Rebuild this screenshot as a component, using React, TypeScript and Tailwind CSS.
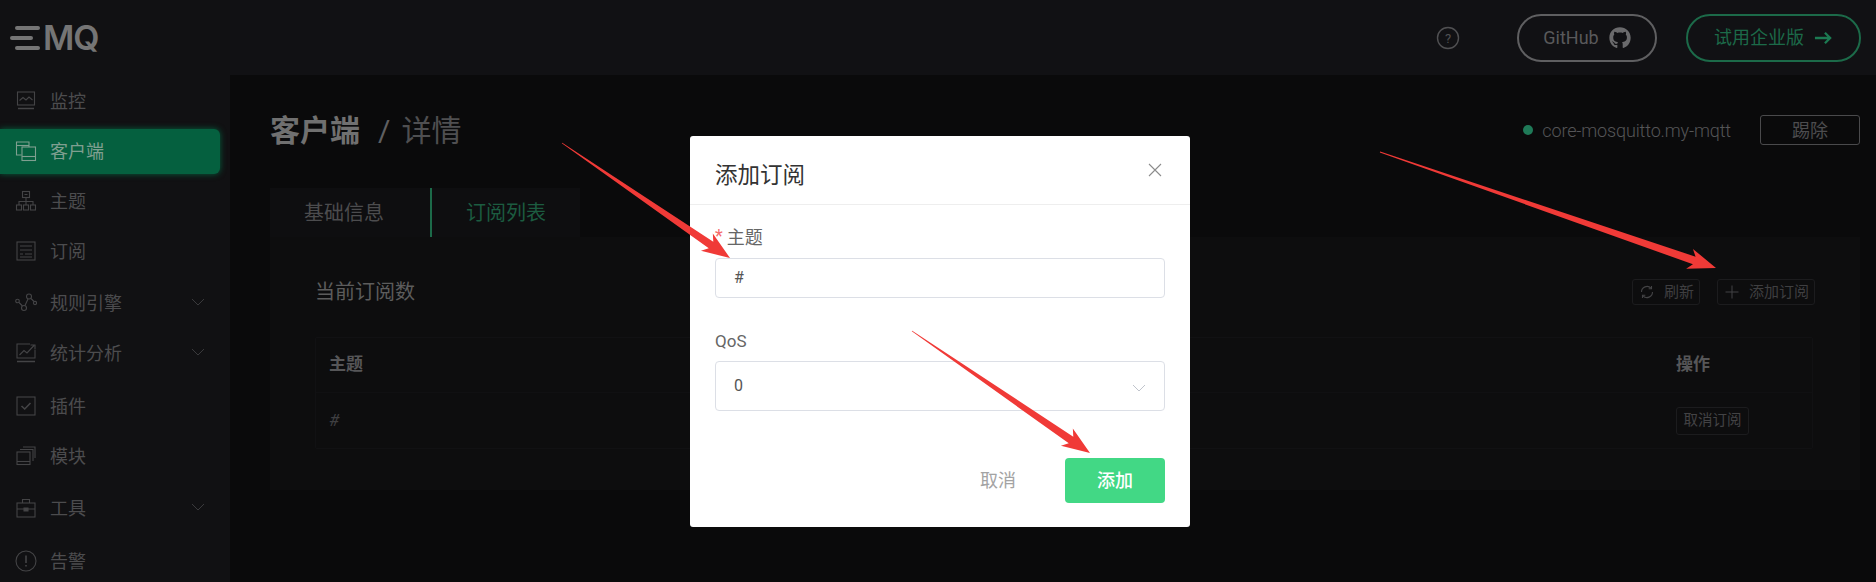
import React from "react";
import { FaGithub } from "react-icons/fa";

const FONT = "[font-family:Roboto,'Noto_Sans_CJK_SC',sans-serif]";

type IconProps = { className?: string };
const S = ({ children, className }: { children: React.ReactNode; className?: string }) => (
  <svg viewBox="0 0 22 22" width="22" height="22" fill="none" stroke="currentColor" strokeWidth="1.1" className={className}>
    {children}
  </svg>
);
const Monitor = () => (
  <S>
    <rect x="2.5" y="2" width="17" height="13" />
    <path d="M4.5 10.5 8 7.5l3 2.5 3-3 3.5 3" />
    <path d="M3 18.5h16" strokeWidth="1.5" />
  </S>
);
const Clients = () => (
  <S>
    <path d="M6.500 15H1.500V2h12.500v5" />
    <path d="M1.500 5.500h12.500" />
    <rect x="7" y="7" width="13.500" height="13.500" />
    <path d="M7 16.500h13.500" />
  </S>
);
const Topic = () => (
  <S>
    <rect x="7.500" y="1.500" width="7" height="6" />
    <path d="M9.500 4.500h3M11 7.500v4M4 15v-3.500h14V15M11 11.500V15" />
    <rect x="1.500" y="15" width="5" height="5" />
    <rect x="8.500" y="15" width="5" height="5" />
    <rect x="15.500" y="15" width="5" height="5" />
  </S>
);
const Sub = () => (
  <S>
    <rect x="2" y="2" width="18" height="18" />
    <path d="M5 6h12M5 10h12M5 14h3M10 14h7M5 17h12" />
  </S>
);
const Rule = () => (
  <S>
    <circle cx="2.500" cy="9" r="1.800" />
    <circle cx="9" cy="16" r="2.500" />
    <circle cx="14" cy="4.500" r="2.500" />
    <circle cx="20" cy="11" r="1.600" />
    <path d="M4 10.500 7.500 14M10 13.500l3-6.500M16 6.500l3 3" />
  </S>
);
const Stats = () => (
  <S>
    <path d="M20 8v8H2V2h13" />
    <path d="M4.500 13 9 8.500l3 2.500 7-7.500M15.500 3H20v4.500" />
    <path d="M2 19.500h18" strokeWidth="1.500" />
  </S>
);
const Plugin = () => (
  <S>
    <rect x="2" y="2" width="18" height="18" />
    <path d="m6.500 11 3.200 3 5.800-6" strokeWidth="1.600" />
  </S>
);
const Module = () => (
  <S>
    <rect x="2" y="7" width="13" height="12.500" />
    <path d="M2 16.500h13" />
    <path d="M5 4.500h13V16" />
    <path d="M8 2h12v11" />
  </S>
);
const Tools = () => (
  <S>
    <rect x="2" y="6" width="18" height="14" />
    <path d="M7.500 6V2.500h7V6M2 12h18" />
    <path d="M9 11h4v3H9z" fill="currentColor" />
  </S>
);
const Alarm = () => (
  <S>
    <circle cx="11" cy="11" r="10" />
    <path d="M11 5.500v7.500M11 15v1.600" strokeWidth="1.600" />
  </S>
);
const Chevron = ({ className }: IconProps) => (
  <svg viewBox="0 0 14 8" width="14" height="8" fill="none" stroke="currentColor" strokeWidth="1" className={className}>
    <path d="M1 1l6 6 6-6" />
  </svg>
);

const items: { label: string; icon: React.ReactNode; cls: string; chevron?: boolean; active?: boolean }[] = [
  { label: "监控", icon: <Monitor />, cls: "" },
  { label: "客户端", icon: <Clients />, cls: "", active: true },
  { label: "主题", icon: <Topic />, cls: "" },
  { label: "订阅", icon: <Sub />, cls: "" },
  { label: "规则引擎", icon: <Rule />, cls: "mt-[2px]", chevron: true },
  { label: "统计分析", icon: <Stats />, cls: "", chevron: true },
  { label: "插件", icon: <Plugin />, cls: "mt-[3px]" },
  { label: "模块", icon: <Module />, cls: "" },
  { label: "工具", icon: <Tools />, cls: "mt-[2px]", chevron: true },
  { label: "告警", icon: <Alarm />, cls: "mt-[3px]" },
];

function Sidebar() {
  return (
    <aside className="w-[230px] shrink-0 h-full bg-[#111113]">
      <div className="h-[76px] pl-[10px] pt-[19px] flex items-start">
        <div className="w-[30px] flex flex-col gap-[6px] mt-[7px] mr-[3px]">
          <div className="w-[25px] h-[4px] ml-[5px] bg-[#757575] rounded-full" />
          <div className="w-[23px] h-[4px] bg-[#757575] rounded-full" />
          <div className="w-[25px] h-[4px] ml-[5px] bg-[#757575] rounded-full" />
        </div>
        <span className="text-[34px] leading-[38px] font-semibold text-[#757575] tracking-[-1px] [font-family:Inter,sans-serif]">MQ</span>
      </div>
      <nav className="flex flex-col">
        {items.map((it) => (
          <div key={it.label} className={`h-[50px] flex items-center ${it.cls}`}>
            <div
              className={
                it.active
                  ? "w-[220px] h-[45px] flex items-center pl-[15px] rounded-r-[6px] bg-[#05603f] text-[#7f9f90] shadow-[0_0_6px_#05603f]"
                  : "w-[220px] h-[45px] flex items-center pl-[15px] text-[#444446]"
              }
            >
              {it.icon}
              <span className={it.active ? "ml-[13px] text-[18px] text-[#7f9f90]" : "ml-[13px] text-[18px] text-[#4c4c4e]"}>{it.label}</span>
              {it.chevron && <Chevron className="ml-auto mr-[15px] -translate-y-[1px] text-[#3a3a3c]" />}
            </div>
          </div>
        ))}
      </nav>
    </aside>
  );
}

function Header() {
  return (
    <header className="h-[75px] bg-[#111114] flex items-center justify-end pr-[15px]">
      <svg viewBox="0 0 24 24" width="24" height="24" fill="none" stroke="#505052" strokeWidth="1.400" className="mr-[57px] mt-[1px]">
        <circle cx="12" cy="12" r="10.500" />
        <text x="12" y="16.500" textAnchor="middle" fontSize="13" fill="#505052" stroke="none" fontFamily="Roboto">?</text>
      </svg>
      <div className="w-[140px] h-[48px] rounded-full border-2 border-[#5f5f61] flex items-center justify-center gap-[10px] text-[#59595b] text-[18px]">
        GitHub
        <FaGithub className="text-[22px] text-[#6a6a6c]" />
      </div>
      <div className="ml-[29px] w-[175px] h-[48px] rounded-full border-2 border-[#1c6a49] flex items-center justify-center gap-[10px] text-[#1c6a49] text-[18px]">
        试用企业版
        <svg viewBox="0 0 20 14" width="19" height="14" fill="none" stroke="#1c7a52" strokeWidth="2.400">
          <path d="M1 7h16M11.500 1.500 17 7l-5.500 5.500" />
        </svg>
      </div>
    </header>
  );
}

function Page() {
  return (
    <div className="pl-[40px] pr-[16px] pt-[34px]">
      <div className="flex items-center h-[42px]">
        <span className="text-[30px] font-bold text-[#707070]">客户端</span>
        <span className="ml-[18px] text-[30px] text-[#5f5f61]">/</span>
        <span className="ml-[11px] text-[30px] text-[#4f4f51]">详情</span>
        <div className="ml-auto flex items-center">
          <span className="w-[10px] h-[10px] rounded-full bg-[#1f7a58]" />
          <span className="ml-[9px] text-[18px] font-light text-[#555557] tracking-[-0.15px]">core-mosquitto.my-mqtt</span>
          <div className="ml-[29px] w-[100px] h-[30px] border border-[#4a4a4c] rounded-[3px] flex items-center justify-center text-[18px] text-[#4d4d4f]">踢除</div>
        </div>
      </div>
      <div className="mt-[37px]">
        <div className="flex h-[49px]">
          <div className="w-[160px] bg-[#0e0e10] flex items-center pl-[34px] pt-[1px] text-[20px] text-[#4c4c4e]">基础信息</div>
          <div className="w-[150px] bg-[#0e0e10] border-l-2 border-[#1c6a49] flex items-center justify-center pt-[1px] text-[20px] text-[#1c5c40]">订阅列表</div>
        </div>
        <div className="bg-[#0d0d0e] h-[253px] pl-[45px] pr-[45px] pt-[42px]">
          <div className="flex items-center h-[26px]">
            <span className="text-[20px] text-[#5c5c5c]">当前订阅数</span>
            <div className="ml-auto flex gap-[17px] text-[15px] text-[#3f3f41]">
              <div className="w-[68px] h-[26px] border border-[#1c1c1e] rounded-[3px] flex items-center pl-[7px] gap-[10px]">
                <svg viewBox="0 0 14 14" width="14" height="14" fill="none" stroke="#434345" strokeWidth="1.100">
                  <path d="M1.500 7a5.500 5.500 0 0 1 9.500-3.800M12.500 7A5.500 5.500 0 0 1 3 10.800" />
                  <path d="M11.500 1v2.800H8.700M2.500 13v-2.800h2.800" />
                </svg>
                刷新
              </div>
              <div className="w-[98px] h-[26px] border border-[#1c1c1e] rounded-[3px] flex items-center pl-[7px] gap-[10px]">
                <svg viewBox="0 0 14 14" width="14" height="14" fill="none" stroke="#434345" strokeWidth="1">
                  <path d="M7 0.500v13M0.500 7h13" />
                </svg>
                添加订阅
              </div>
            </div>
          </div>
          <div className="mt-[32px] mr-[2px] border border-[#111113] rounded-[2px]">
            <div className="h-[55px] flex items-center pl-[13px] pr-[12px] border-b border-[#101012] text-[17px] font-bold text-[#565658]">
              <span>主题</span>
              <span className="ml-auto w-[124px]">操作</span>
            </div>
            <div className="h-[55px] flex items-center pl-[13px] pr-[12px] text-[#3f3f41] text-[17px]">
              <span className="italic">#</span>
              <div className="ml-auto w-[124px]">
                <div className="w-[73px] h-[28px] border border-[#1c1c1e] rounded-[3px] flex items-center justify-center text-[14.500px] text-[#434345]">取消订阅</div>
              </div>
            </div>
          </div>
        </div>
      </div>
    </div>
  );
}

function Modal() {
  return (
    <div className="absolute left-[690px] top-[136px] w-[500px] h-[391px] bg-white rounded-[3px] flex flex-col text-[#606266]">
      <div className="h-[69px] border-b border-[#eeeeee] flex items-center justify-between pl-[25px] pr-[28px]">
        <span className="text-[22.500px] text-[#333333] mt-[12px]">添加订阅</span>
        <svg viewBox="0 0 14 14" width="14" height="14" fill="none" stroke="#8c8c8c" strokeWidth="1.100">
          <path d="M1 1l12 12M13 1 1 13" />
        </svg>
      </div>
      <div className="px-[25px] pt-[18px] flex-1 flex flex-col">
        <div className="h-[35px] pb-[7px] text-[18px] flex items-center text-[#666666]">
          <span className="text-[#f56c6c] mr-[4px] -translate-y-[2px]">*</span>主题
        </div>
        <div className="h-[40px] border border-[#dcdfe6] rounded-[4px] flex items-center px-[18px] text-[16px] text-[#555555]">#</div>
        <div className="mt-[24px] h-[39px] text-[17px] flex items-center text-[#666666]">QoS</div>
        <div className="h-[50px] border border-[#dcdfe6] rounded-[4px] flex items-center justify-between pl-[18px] pr-[18px] text-[16px] text-[#555555]">
          0
          <Chevron className="text-[#c0c4cc] mt-[3px]" />
        </div>
        <div className="mt-[47px] flex items-center justify-end">
          <span className="text-[18px] text-[#a3a3a3] mr-[49px]">取消</span>
          <div className="w-[100px] h-[45px] bg-[#42d885] rounded-[4px] flex items-center justify-center text-[18px] font-medium text-white">添加</div>
        </div>
      </div>
    </div>
  );
}

function arrow(x1: number, y1: number, x2: number, y2: number) {
  const len = Math.hypot(x2 - x1, y2 - y1);
  const ux = (x2 - x1) / len;
  const uy = (y2 - y1) / len;
  const nx = -uy;
  const ny = ux;
  const at = (d: number, w: number) => `${x1 + ux * d + nx * w},${y1 + uy * d + ny * w}`;
  const neck = len - 23;
  const head = len - 28;
  return [at(0, 0.4), at(neck, 4), at(head, 10.5), at(len, 0), at(head, -10.5), at(neck, -4), at(0, -0.4)].join(" ");
}

function Arrows() {
  return (
    <svg className="absolute inset-0 pointer-events-none" width="1876" height="582" viewBox="0 0 1876 582">
      <polygon points={arrow(562, 143, 730, 258)} fill="#f03a37" />
      <polygon points={arrow(1380, 152, 1716, 268)} fill="#f03a37" />
      <polygon points={arrow(912, 331, 1090, 453)} fill="#f03a37" />
    </svg>
  );
}

export default function App() {
  return (
    <div className={`relative w-full h-[582px] overflow-hidden flex bg-[#0a0a0b] ${FONT}`}>
      <Sidebar />
      <main className="flex-1 min-w-0">
        <Header />
        <Page />
      </main>
      <Modal />
      <Arrows />
    </div>
  );
}
